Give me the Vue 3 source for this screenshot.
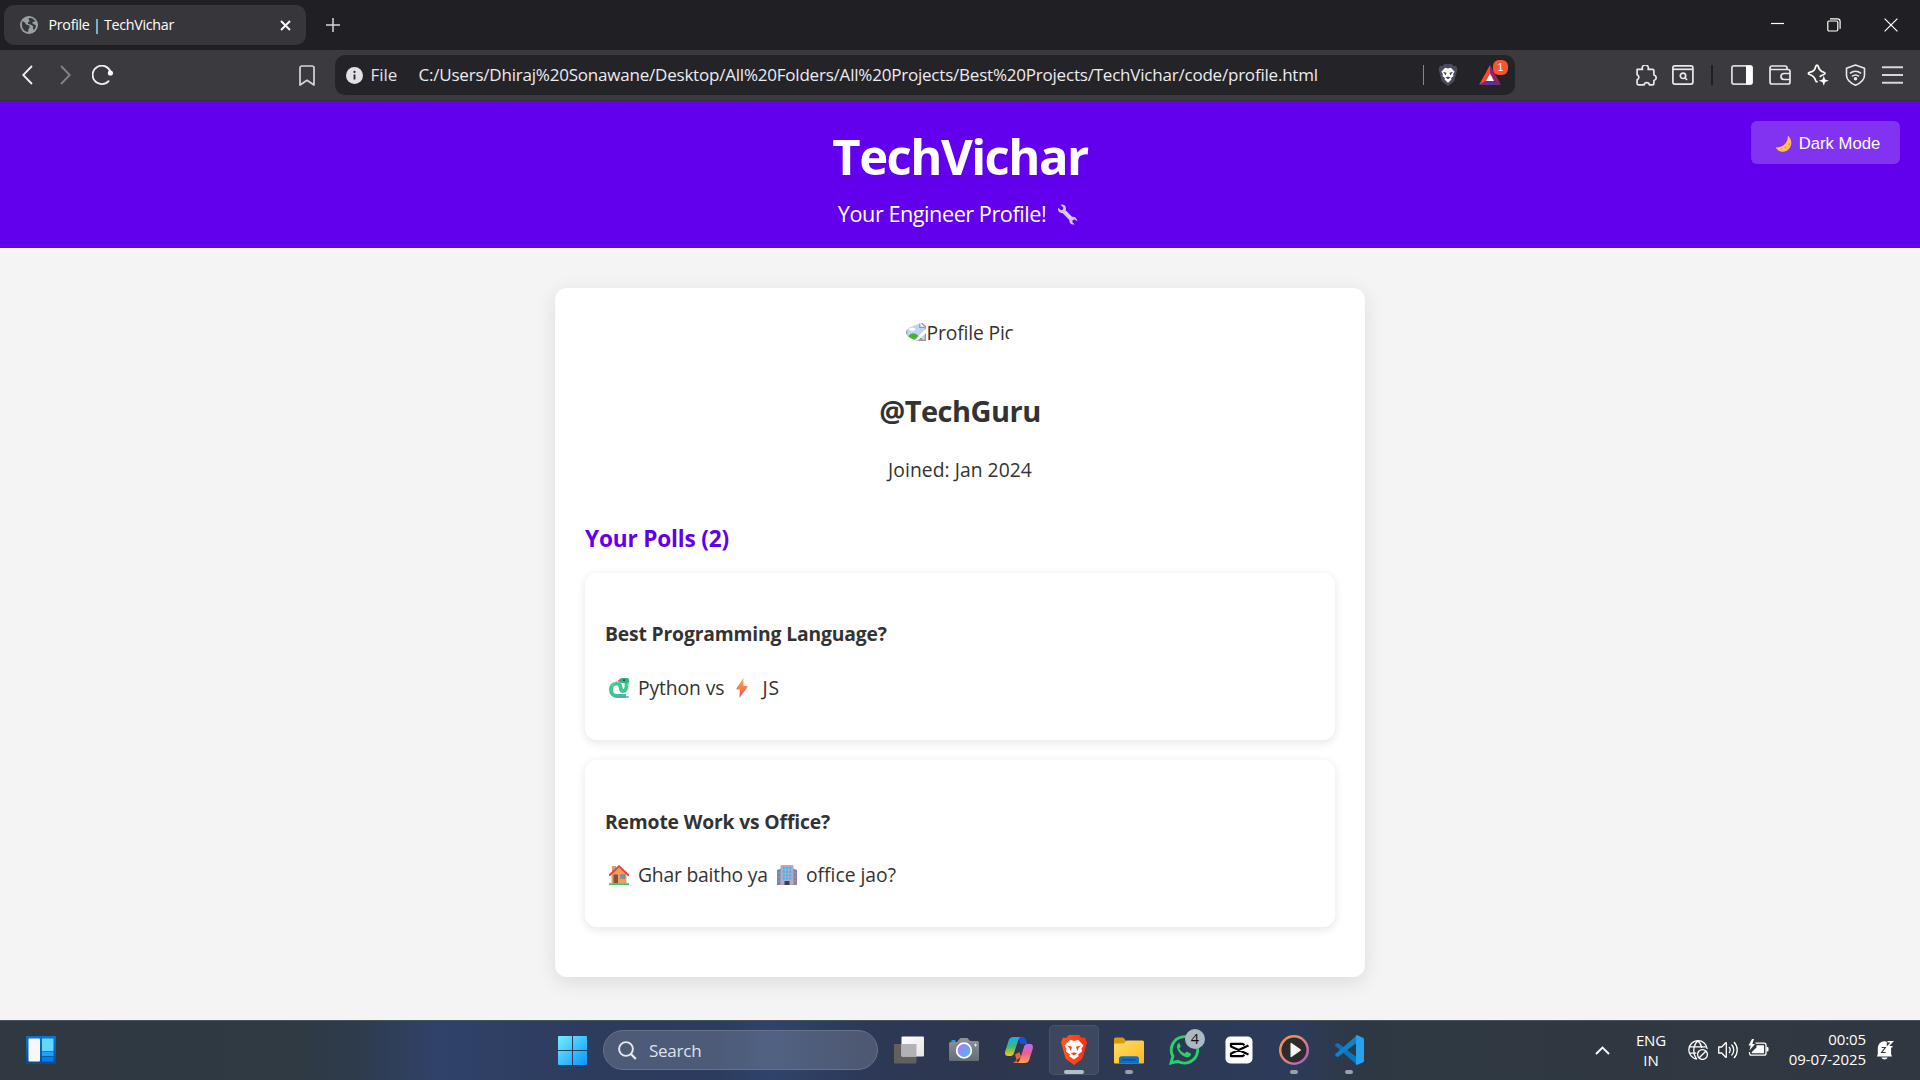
<script setup>
const url = 'C:/Users/Dhiraj%20Sonawane/Desktop/All%20Folders/All%20Projects/Best%20Projects/TechVichar/code/profile.html'
</script>

<template>
  <div class="screen">
    <div class="tabstrip">
      <div class="tab">
        <svg class="tab-globe" width="18" height="18" viewBox="0 0 18 18">
          <circle cx="9" cy="9" r="9" fill="#9aa0a6" />
          <path d="M2.2 5.2C4.5 6 5.6 6.8 6.1 8.6L9.2 9.4 9.8 11.2 8.4 13.2 8.2 15.9C4.6 15.6 2 12.8 2 9.2 2 7.6 1.8 6.4 2.2 5.2ZM8.3 2.3 11 2.1C12.8 2.6 14.4 3.7 15.3 5.4L12.3 6 12.8 7.8 15.9 9.2C15.9 11.1 15.1 12.8 13.8 14L12.9 12.2 13.2 10.2 10.6 8.6 8.2 7.9 7.9 6.2 9.6 5.5Z" fill="#37363b" />
        </svg>
        <span class="tab-title">Profile | TechVichar</span>
        <svg width="11" height="11" viewBox="0 0 11 11"><path d="M1 1l9 9M10 1l-9 9" stroke="#fff" stroke-width="1.9" fill="none" /></svg>
      </div>
      <svg class="plus" width="14" height="14" viewBox="0 0 14 14"><path d="M7 0v14M0 7h14" stroke="#d6d5da" stroke-width="1.5" /></svg>
      <div class="window-buttons">
        <svg width="13" height="14" viewBox="0 0 13 14"><path d="M0 5.5h13" stroke="#fff" stroke-width="1.2" /></svg>
        <svg width="14" height="14" viewBox="0 0 14 14" fill="none" stroke="#fff" stroke-width="1.2"><rect x=".8" y="3" width="10" height="10" rx="1.2" /><path d="M3 .8h7.5a2.6 2.6 0 0 1 2.6 2.6v7.3" /></svg>
        <svg width="14" height="14" viewBox="0 0 14 14"><path d="M.6.6l12.8 12.8M13.4.6L.6 13.4" stroke="#fff" stroke-width="1.2" /></svg>
      </div>
    </div>

    <div class="toolbar">
      <div class="nav">
        <svg width="11" height="20" viewBox="0 0 11 20"><path d="M10 1L1.2 10 10 19" fill="none" stroke="#f1f0f4" stroke-width="1.8" /></svg>
        <svg width="11" height="20" viewBox="0 0 11 20"><path d="M1 1l8.8 9L1 19" fill="none" stroke="#858389" stroke-width="1.8" /></svg>
        <svg width="22" height="20" viewBox="0 0 22 20"><path d="M16.6 16.1A9.2 9.2 0 1 1 18.6 7" fill="none" stroke="#f1f0f4" stroke-width="1.8" stroke-linecap="round" /><circle cx="18.4" cy="8" r="2.6" fill="#fff" /></svg>
      </div>
      <svg class="bookmark" width="16" height="21" viewBox="0 0 16 21"><path d="M3 1h10a2 2 0 0 1 2 2v17l-7-4.7L1 20V3a2 2 0 0 1 2-2z" fill="none" stroke="#d6d5da" stroke-width="1.7" stroke-linejoin="round" /></svg>
      <div class="address">
        <svg class="info" width="17" height="17" viewBox="0 0 17 17"><circle cx="8.5" cy="8.5" r="8.5" fill="#e3e1e8" /><path d="M8.5 7.5v5" stroke="#242328" stroke-width="1.8" /><circle cx="8.5" cy="4.9" r="1.1" fill="#242328" /></svg>
        <span class="scheme">File</span>
        <span class="url">{{ url }}</span>
        <i class="address-rule"></i>
        <svg class="shield" width="20" height="22" viewBox="0 0 26 30">
          <path d="M8 0h10l3 3 3-.5 2 5-1 3-3 11c-.5 2-1.500 3-3 4l-6 4.500-6-4.500c-1.500-1-2.500-2-3-4L1 10.500 0 7.500l2-5L5 3z" fill="#4a4a5e" />
          <path d="M13 6l4-1 5 5.500-2 3 .5 3-3.500 3 .8 1.700L13 25.500l-4.800-4.300.8-1.700-3.500-3 .5-3-2-3L9 5z" fill="#fff" />
          <path d="M6 10.500l5 1.300-.5 2-1 1.800-1.500-2.600zM20 10.500l-5 1.300.5 2 1 1.800 1.500-2.600zM9.500 18.500l3.500-1.300 3.500 1.300-3.500 2.300z" fill="#4a4a5e" />
        </svg>
        <div class="rewards">
          <svg width="22" height="20" viewBox="0 0 22 20">
            <path d="M11 0L0 20l7-4 4-7z" fill="#ff4724" /><path d="M11 0l11 20-7-4-4-7z" fill="#9e1f63" /><path d="M0 20h22l-7-4H7z" fill="#662d91" /><path d="M11 8.200L15 16H7z" fill="#fff" />
          </svg>
          <b class="rewards-count">1</b>
        </div>
      </div>

      <div class="extensions">
        <svg class="puzzle" width="22" height="21" viewBox="0 0 22 21"><path d="M2.200 4.200h5a3.100 3.100 0 1 1 5.600 0h4.400a1.400 1.400 0 0 1 1.400 1.400v4.200a2.800 2.800 0 0 1 0 5.500v3a1.400 1.400 0 0 1-1.400 1.400h-3.100a2.700 2.700 0 0 0-5.300 0H3.200a1.400 1.400 0 0 1-1.400-1.400v-3.600a2.800 2.800 0 0 0 0-5.200V4.200z" transform="translate(.3 .2)" fill="none" stroke="#e9e8ec" stroke-width="1.700" stroke-linejoin="round" /></svg>
        <svg width="22" height="20" viewBox="0 0 22 20" fill="none" stroke="#e9e8ec" stroke-width="1.700"><rect x=".9" y=".9" width="20" height="18.200" rx="2" /><path d="M1 4.300h20" /><circle cx="11" cy="10.800" r="2.700" /><path d="M13 12.800l2 2.200" /></svg>
        <i class="ext-rule"></i>
        <svg width="22" height="20" viewBox="0 0 22 20"><rect x=".9" y=".9" width="20.200" height="18.200" rx="2" fill="none" stroke="#d6d5da" stroke-width="1.800" /><path d="M15 .5h4.500a2 2 0 0 1 2 2v15a2 2 0 0 1-2 2H15z" fill="#fff" /></svg>
        <svg width="22" height="20" viewBox="0 0 22 20" fill="none" stroke="#e9e8ec" stroke-width="1.700"><path d="M1 3.500V17a2 2 0 0 0 2 2h16a2 2 0 0 0 2-2V6.500a2 2 0 0 0-2-2H2.500A1.500 1.500 0 0 1 1 3 2 2 0 0 1 3 1h13a2 2 0 0 1 2 2v1.500M21 8.500h-6a3 3 0 0 0 0 6h6" /></svg>
        <svg width="22" height="22" viewBox="0 0 22 22"><path d="M10 1.200c.7 0 1 .4 1.200 1 .9 3.600 2 5 5.600 6 1.700.5 1.700 1.800 0 2.300-1.600.5-2.700 1-3.500 1.900M10 1.200c-.7 0-1 .4-1.200 1-.9 3.800-2 5.100-6.200 6.100-1.700.4-1.700 1.700 0 2.200 3.600 1 5 2.500 6 6.100.2.900.7 1.300 1.400 1.100" fill="none" stroke="#fff" stroke-width="1.700" stroke-linecap="round" /><path d="M16.800 11.800l1.300 3.700 3.700 1.300-3.700 1.300-1.300 3.700-1.300-3.700-3.700-1.300 3.700-1.300z" fill="#fff" /></svg>
        <svg width="21" height="22" viewBox="0 0 21 22" fill="none" stroke="#e9e8ec" stroke-width="1.600"><path d="M10.500 1l9 3.200v7c0 4.500-4 7.800-9 10-5-2.200-9-5.500-9-10v-7z" stroke-linejoin="round" /><path d="M5 9.300c3.300-2.700 7.700-2.700 11 0M7 12.300c2.200-1.700 4.800-1.700 7 0" /><circle cx="10.500" cy="14.700" r="1" fill="#fff" /></svg>
        <svg width="21" height="18" viewBox="0 0 21 18"><path d="M0 1.200h21M0 9h21M0 16.800h21" stroke="#d6d5da" stroke-width="1.900" /></svg>
      </div>
    </div>

    <header class="hero">
      <h1>TechVichar</h1>
      <p class="tagline">
        <span>Your Engineer Profile!</span>
        <svg width="21" height="21" viewBox="0 0 21 21">
          <path d="M1.200 3.800L4 6.200 6 5.600 6.200 3.300 3.600.9C6.300-.2 9.200 1.600 9 5L8.700 6.200 15 12.800C17.500 12.200 20.300 14 20.300 17.200L17.600 15.400 15.700 16 15.400 18.200 17.700 20.200C14.600 21.200 12 19.200 12.300 15.900L5.700 9.200C2.800 9.600.4 7.200 1.200 3.800Z" fill="#d3c4e4" />
          <path d="M8 7.500l6 6.300" stroke="#eee6f4" stroke-width="1" />
        </svg>
      </p>
      <button class="theme">
        <svg width="17" height="17" viewBox="0 0 17 17"><path d="M12.800.4C18 4.800 17.300 12.600 11.600 15.700 7.500 17.800 2.600 16.500.6 12.200 7.500 13 13.400 8.300 12.800.4Z" fill="#ffc34d" /><circle cx="14.200" cy="9.300" r="1" fill="#e59a3c" /><circle cx="10.600" cy="12.300" r="1.200" fill="#eda743" /><circle cx="6.300" cy="14" r=".8" fill="#e59a3c" /></svg>
        Dark Mode
      </button>
    </header>

    <main class="page">
      <section class="card">
        <div class="avatar">
          <svg width="20" height="20" viewBox="0 0 16 16">
            <path d="M.5.5h11l4 4v11H.5z" fill="#c2d4f5" stroke="#9a9a9a" /><path d="M11 1v4h4" fill="#fff" stroke="#9a9a9a" />
            <ellipse cx="5" cy="6.500" rx="2.500" ry="1.200" fill="#fff" /><path d="M1.500 15v-2.500c2-3 5-3.500 7.500-1.500l4.500 4z" fill="#4fae38" />
            <path d="M16 6L6.500 15.500H9.500l6.500-6z" fill="#fff" />
          </svg><span>Profile Pic</span>
        </div>
        <h2>@TechGuru</h2>
        <p class="joined">Joined: Jan 2024</p>
        <h3>Your Polls (2)</h3>
        <div class="polls">
          <article class="poll">
            <h4>Best Programming Language?</h4>
            <p>
              <svg class="snake" width="20" height="20" viewBox="0 0 20 20">
                <path d="M17 18H8C4 18 2 15.500 2 12 2 8.500 4 6 7 5.500c2.500-.3 4.300 1 4.500 3.500.2 2 .5 4 2.500 4s3.500-2 3.500-5V3.500" fill="none" stroke="#3fc495" stroke-width="3.800" />
                <path d="M3.500 8C4.500 5 7 4 9.500 4.600" stroke="#9be36a" stroke-width="1" fill="none" stroke-dasharray="1.500 1.500" />
                <path d="M10 1.800Q11 0 13 0h5.500Q20 0 20 2v3h-7.500Q10 5 10 1.800Z" fill="#2fb389" />
                <path d="M19 4v8" stroke="#9be36a" stroke-width="1" stroke-dasharray="1.500 1.500" />
                <circle cx="15" cy="2.200" r=".9" fill="#222" /><path d="M9 2.800h2.500" stroke="#f0477f" stroke-width="1.300" />
                <path d="M5 18.200Q10 20.200 20 19.400v-1.200z" fill="#4aa9c9" />
              </svg>
              <span class="w-python">Python vs</span>
              <svg class="bolt" width="12" height="20" viewBox="0 0 12 20"><defs><linearGradient id="bolt" x1="0" y1="0" x2="0" y2="1"><stop offset="0" stop-color="#ffb04a" /><stop offset="1" stop-color="#f04a52" /></linearGradient></defs><path d="M7.300 0L.4 10.500q-.4 1 .6 1h3L3.300 20 11.600 9q.4-1-.6-1H7.600z" fill="url(#bolt)" /></svg>
              <span class="w-js">JS</span>
            </p>
          </article>
          <article class="poll">
            <h4>Remote Work vs Office?</h4>
            <p>
              <svg class="house" width="20" height="20" viewBox="0 0 20 20">
                <path d="M3 1h4v6H3z" fill="#d9a06c" /><path d="M2.500 9L10 2l7.500 7v9.500h-15z" fill="#e8a066" /><path d="M4.500 9.500H9v9H4.500z" fill="#85503f" /><path d="M11.500 9.500H16v4h-4.500z" fill="#35a7f0" stroke="#b8744e" stroke-width=".6" />
                <path d="M.7 10L10 1.300 19.300 10" fill="none" stroke="#e5463d" stroke-width="2" stroke-linecap="round" /><path d="M0 18.200h20V20H0z" fill="#3ecb6b" />
              </svg>
              <span class="w-ghar">Ghar baitho ya</span>
              <svg class="office" width="20" height="20" viewBox="0 0 20 20">
                <path d="M0 5l4-1.500V20H0zM20 5l-4-1.500V20h4z" fill="#8c819c" /><path d="M3.500 1q0-1 1-1h11q1 0 1 1v19h-13z" fill="#b4abc0" />
                <path d="M5.800 2h2v2.300h-2zm3.200 0h2v2.300H9zm3.200 0h2v2.300h-2zM5.800 5.600h2v2.300h-2zm3.200 0h2v2.300H9zm3.200 0h2v2.300h-2zM5.800 9.200h2v2.300h-2zm3.200 0h2v2.300H9zm3.200 0h2v2.300h-2zM5.800 12.600h2v2h-2zm3.200 0h2v2H9zm3.200 0h2v2h-2zM1 7h1.300v2H1zm0 4h1.300v2H1zm0 4h1.300v2H1zM17.700 7H19v2h-1.300zm0 4H19v2h-1.300zm0 4H19v2h-1.300z" fill="#3db4f5" />
                <path d="M7.500 16h5v4h-5z" fill="#453a52" />
              </svg>
              <span class="w-office">office jao?</span>
            </p>
          </article>
        </div>
      </section>
    </main>

    <footer class="taskbar">
      <svg class="widgets" width="30" height="28" viewBox="0 0 30 28">
        <defs><linearGradient id="wd" x1="0" y1="0" x2="0" y2="1"><stop offset="0" stop-color="#0078d4" /><stop offset="1" stop-color="#114a8b" /></linearGradient></defs>
        <rect width="30" height="28" rx="1" fill="url(#wd)" /><rect x="2.500" y="2.500" width="11.500" height="23" rx="1" fill="#f7f7f7" /><rect x="16" y="2.500" width="11.500" height="12.500" fill="#62d7ff" /><rect x="16" y="15.500" width="11.500" height="4.500" fill="#18a4fb" /><rect x="16" y="20.800" width="11.500" height="4.700" fill="#0380ea" />
      </svg>
      <svg class="start" width="29" height="29" viewBox="0 0 29 29">
        <defs><linearGradient id="win" x1="0" y1="0" x2="1" y2="1"><stop offset="0" stop-color="#74eeff" /><stop offset="1" stop-color="#0795ff" /></linearGradient></defs>
        <path d="M1 0h13v14H0V1q0-1 1-1zm14 0h13q1 0 1 1v13H15zM0 15h14v14H1q-1 0-1-1zm15 0h14v13q0 1-1 1H15z" fill="url(#win)" />
      </svg>
      <div class="search">
        <svg width="19" height="19" viewBox="0 0 19 19"><circle cx="8" cy="8" r="6.900" fill="none" stroke="#e6e8ee" stroke-width="1.900" /><path d="M12.500 12.500l5.300 5.500" stroke="#e6e8ee" stroke-width="2.400" /></svg>
        <span>Search</span>
      </div>
      <div class="apps">
        <div class="app">
          <svg width="30" height="30" viewBox="0 0 30 30"><defs><linearGradient id="tv" x1="0" y1="0" x2="1" y2="1"><stop offset="0" stop-color="#fff" /><stop offset="1" stop-color="#e4e4e4" /></linearGradient></defs><rect y="9" width="22.500" height="19.500" rx="1" fill="#61605f" /><rect x="7.500" y="1.500" width="22.500" height="20" rx="1" fill="url(#tv)" /><path d="M7.500 9h15v12.500h-15z" fill="#b2b2b2" /></svg>
        </div>
        <div class="app">
          <svg width="30" height="30" viewBox="0 0 30 30">
            <defs><linearGradient id="cam" x1="0" y1="0" x2="1" y2="1"><stop offset="0" stop-color="#c36df0" /><stop offset="1" stop-color="#35c6f5" /></linearGradient><linearGradient id="cb" x1="0" y1="0" x2="0" y2="1"><stop offset="0" stop-color="#8d949b" /><stop offset="1" stop-color="#666c73" /></linearGradient></defs>
            <path d="M2.500 5h4v3h-4z" fill="#1f9fe8" /><path d="M9 5.500L11.500 3h7L21 6h7.500Q30 6 30 7.500v17q0 1.500-1.500 1.500h-27Q0 26 0 24.500V8.500Q0 7 1.500 7H8z" fill="url(#cb)" /><circle cx="15" cy="15.500" r="7.300" fill="url(#cam)" stroke="#fff" stroke-width="1.800" /><path d="M26.500 8.500v3M25 10h3" stroke="#dfe3e6" />
          </svg>
        </div>
        <div class="app">
          <svg width="30" height="30" viewBox="0 0 30 30">
            <defs>
              <linearGradient id="c1" x1="0" y1="0" x2="0" y2="1"><stop offset="0" stop-color="#15aef0" /><stop offset=".5" stop-color="#3cb87d" /><stop offset="1" stop-color="#f5c914" /></linearGradient>
              <linearGradient id="c2" x1="0" y1="0" x2="0" y2="1"><stop offset="0" stop-color="#b56cf5" /><stop offset=".5" stop-color="#ee5c92" /><stop offset="1" stop-color="#ffa54c" /></linearGradient>
            </defs>
            <path d="M14 2h4.500c2 0 2.800 1 3.500 3l1.500 4H16z" fill="#1d4fd7" />
            <path d="M9 28h7c-2 0-3-1-3.500-3L11 19.500l4.500-2.500 1.500 5z" fill="#f0603c" />
            <path d="M9.500 2H17c-1.500.5-2.300 1.600-3 4l-4 12c-.7 2.200-1.500 3-3.500 3H4C1.600 21 .5 19 1.200 16.500L4.500 6C5.500 3 7 2 9.500 2z" fill="url(#c1)" />
            <path d="M20.500 28H13c1.500-.5 2.300-1.600 3-4l4-12c.7-2.200 1.500-3 3.500-3H26c2.400 0 3.500 2 2.800 4.500L25.500 24c-1 3-2.500 4-5 4z" fill="url(#c2)" />
          </svg>
        </div>
        <div class="app active">
          <svg width="26" height="30" viewBox="0 0 26 30">
            <defs><linearGradient id="br"><stop offset="0" stop-color="#ff5a1f" /><stop offset="1" stop-color="#ff2f14" /></linearGradient></defs>
            <path d="M8 0h10l3 3 3-.5 2 5-1 3-3 11c-.5 2-1.500 3-3 4l-6 4.500-6-4.500c-1.500-1-2.500-2-3-4L1 10.500 0 7.500l2-5L5 3z" fill="url(#br)" />
            <path d="M13 6l4-1.200 5.500 5.700-2 3 .5 3-4 3 .8 1.500L13 24.500 8.200 21l.8-1.500-4-3 .5-3-2-3L9 4.800z" fill="#fff" />
            <path d="M6 10.500l5 1.300-.5 2-1 2.200-1-3zM20 10.500l-5 1.300.5 2 1 2.200 1-3zM9.800 18.500l3.200-1.300 3.200 1.300-3.200 2z" fill="#ff4019" />
          </svg>
          <i class="dot wide"></i>
        </div>
        <div class="app">
          <svg width="30" height="30" viewBox="0 0 30 30">
            <defs><linearGradient id="fo" x1="0" y1="0" x2="1" y2="1"><stop offset="0" stop-color="#ffdb6b" /><stop offset="1" stop-color="#fcba1a" /></linearGradient></defs>
            <path d="M0 4q0-1.500 1.500-1.500H9L12.500 6v6H0z" fill="#dc9a07" /><path d="M0 8.500h9.500L13 5.500h15.500Q30 5.500 30 7v20.500q0 1-1 1H1q-1 0-1-1z" fill="url(#fo)" /><path d="M5 28.500V24q0-2.700 2.700-2.700h14.600Q25 21.300 25 24v4.500z" fill="#0f6fc6" /><path d="M8.500 24.800h13" stroke="#0a4a88" stroke-width="1.200" />
          </svg>
          <i class="dot"></i>
        </div>
        <div class="app">
          <svg width="30" height="30" viewBox="0 0 30 30"><path d="M2 28l1.900-6.800A13.200 13.200 0 1 1 8.900 26.300z" fill="none" stroke="#25d366" stroke-width="2.900" /><path d="M10 8c-1.500.8-2.400 2.300-2 4.500 1 4.500 5 9 9.700 9.800 2 .3 4-.9 4.300-3 0-.6-.2-.8-.7-1l-3-1.500c-.5-.2-.8-.2-1.200.3l-1.200 1.500c-3-1-4.500-2.700-5.700-5l1.300-1.700c.2-.4.2-.7 0-1.100l-1.200-2.700z" fill="#25d366" /></svg>
          <b class="app-badge">4</b>
        </div>
        <div class="app">
          <svg width="30" height="30" viewBox="0 0 30 30"><rect x="1.500" y="1.500" width="27" height="27" rx="5" fill="#fff" /><path d="M24.500 10.500L7 18.500V21.200H18.500L20.500 19.800M24.500 19.500L7 11.500V8.800H18.500L20.500 10.200" fill="none" stroke="#000" stroke-width="2.200" stroke-linejoin="round" /></svg>
        </div>
        <div class="app">
          <svg width="30" height="30" viewBox="0 0 30 30">
            <defs><linearGradient id="mp" x1="0" y1="0" x2="1" y2="1"><stop offset="0" stop-color="#ff9a3d" /><stop offset=".5" stop-color="#e08383" /><stop offset="1" stop-color="#9a55d8" /></linearGradient></defs>
            <circle cx="15" cy="15" r="15" fill="url(#mp)" /><circle cx="15" cy="15" r="12.500" fill="#2d2c2c" /><path d="M11.500 8.500q0-1 1-.5l9 6.200q.8.800 0 1.500l-9 6.300q-1 .5-1-.5z" fill="#f5f5f5" />
          </svg>
          <i class="dot"></i>
        </div>
        <div class="app">
          <svg width="30" height="30" viewBox="0 0 30 30"><path d="M.6 10.200L2.800 8.300q.7-.5 1.500 0L22.500 22v7.500z" fill="#0a74be" /><path d="M.6 19.800l2.200 1.900q.7.500 1.500 0L22.500 8V.5z" fill="#0f82cc" /><path d="M22 .4q.5-.5 1.400-.2l5.600 2.600q1 .5 1 1.500v21.400q0 1-1 1.500l-5.600 2.600q-.9.300-1.400-.2z" fill="#27a2ef" /></svg>
          <i class="dot"></i>
        </div>
      </div>
      <div class="tray">
        <svg class="chev" width="15" height="9" viewBox="0 0 15 9"><path d="M1 8l6.500-6.500L14 8" fill="none" stroke="#fff" stroke-width="1.900" /></svg>
        <div class="lang"><span>ENG</span><span>IN</span></div>
        <svg class="net" width="20" height="20" viewBox="0 0 20 20" fill="none" stroke="#fff" stroke-width="1.300"><path d="M9 19A9.200 9.200 0 1 1 19.200 9M1.300 6.800h17.400M1.300 13.200h7M8.500 19c-3.800-5-3.800-13 1.200-18.200C12.300 3 13.500 5.600 13.700 8" /><circle cx="14.500" cy="14.500" r="4.900" /><path d="M11.200 17.800l6.600-6.600" /></svg>
        <svg class="vol" width="20" height="20" viewBox="0 0 20 20" fill="none" stroke="#fff" stroke-width="1.300"><path d="M.7 7h3l4-4.200q.6-.4.600.3v13.800q0 .7-.6.3L3.700 13h-3z" stroke-linejoin="round" /><path d="M11 7c1.500 1.800 1.500 4.200 0 6M13.500 4.500c3 3.200 3 7.800 0 11M16 2c4.300 4.600 4.300 11.400 0 16" /></svg>
        <svg class="bat" width="21" height="20" viewBox="0 0 21 20"><path d="M7.500 4.200H16q2 0 2 2v8q0 2-2 2H3.500q-2 0-2-2V13" fill="none" stroke="#fff" stroke-width="1.300" /><path d="M8.500 6.200h7.500v8H3.800v-1.200l4.700-4.500zM18.500 8h1q1 0 1 1v2.500q0 1-1 1h-1z" fill="#fff" /><path d="M4 0L.5 6.500h2.200L1.500 11.500 7 5H4.300L6 0z" fill="#fff" /></svg>
        <div class="clock"><span>00:05</span><span>09-07-2025</span></div>
        <svg class="bell" width="18" height="20" viewBox="0 0 18 20"><path d="M1.800 14V8a6.700 6.700 0 0 1 9-6.300V7h4.300v7l.9 2.500H.9zM5.300 17.500h6.400q-1 2-3.200 2t-3.200-2z" fill="#fff" /><path d="M5.700 7.500h3.600l-3.600 5h4" fill="none" stroke="#2f3740" stroke-width="1.200" /><path d="M11.500 1.700h4.700l-4.700 5h5" fill="none" stroke="#fff" stroke-width="1.500" /></svg>
      </div>
    </footer>
  </div>
</template>

<style>
body { margin: 0; }
</style>

<style scoped>
.screen { width: 1920px; height: 1080px; display: flex; flex-direction: column; overflow: hidden; background: #f4f4f4; color: #333; font-family: "Open Sans", "Noto Sans", sans-serif; }
svg { display: block; flex: none; }
h1, h2, h3, h4, p { margin: 0; }
span { white-space: nowrap; }

.tabstrip { height: 50px; box-sizing: border-box; flex: none; display: flex; align-items: center; padding: 0 22px 0 4px; background: #201f24; }
.tab { width: 302px; height: 40px; box-sizing: border-box; display: flex; align-items: center; padding: 0 15px 0 16px; border-radius: 10px; background: #37363b; }
.tab-title { flex: 1; padding-left: 10.500px; font-size: 14.3px; letter-spacing: -.3px; line-height: 20px; color: #fff; }
.plus { margin-left: 20px; }
.window-buttons { margin-left: auto; display: flex; align-items: center; gap: 43px; }

.toolbar { height: 51px; box-sizing: border-box; flex: none; display: flex; align-items: center; padding: 0 17px 0 22px; border-bottom: 1px solid #333238; background: #3b3a3f; }
.nav { display: flex; align-items: center; gap: 27px; width: 277px; }
.nav svg:last-child { margin-left: -6px; }
.address { width: 1180px; height: 40px; box-sizing: border-box; margin-left: 20px; display: flex; align-items: center; padding: 0 14px 0 11px; border-radius: 10px; background: #242328; color: #ececf1; font-size: 17px; line-height: 24px; }
.scheme { margin-left: 7.500px; width: 48px; color: #e3e1e8; }
.url { flex: 1; letter-spacing: -.21px; }
.address-rule { width: 1px; height: 20px; margin-right: 14px; background: #87858b; }
.rewards { position: relative; margin-left: 21px; }
.rewards-count { position: absolute; left: 14px; top: -5px; width: 15px; height: 15px; border-radius: 6px; background: #fb542b; color: #fff; font: 400 10.5px/15px "Liberation Sans", sans-serif; text-align: center; }
.extensions { margin-left: auto; display: flex; align-items: center; gap: 16px; }
.puzzle { margin-right: -1px; }
.ext-rule { width: 2px; height: 20px; margin: 0 2px 0 1px; background: #1f1e23; }

.hero { position: relative; height: 147px; box-sizing: border-box; flex: none; display: flex; flex-direction: column; align-items: center; padding-top: 22px; background: #6200ee; color: #fff; }
h1 { font-size: 49px; line-height: 66px; letter-spacing: -1.55px; }
.tagline { display: flex; align-items: center; gap: 11px; margin-top: 10px; font-size: 21.7px; line-height: 30px; letter-spacing: -.48px; }
.tagline span { margin-left: -4px; }
.theme { position: absolute; top: 20px; right: 20px; width: 149px; height: 43px; display: flex; align-items: center; justify-content: center; gap: 7px; padding: 2px 0 0 4px; border: 0; border-radius: 6px; background: rgba(255, 255, 255, .2); color: #fff; font: 16.67px "Liberation Sans", Arial, sans-serif; }

.page { flex: 1; display: flex; justify-content: center; align-items: flex-start; padding-top: 40px; }
.card { width: 810px; height: 689px; box-sizing: border-box; padding: 31px 30px 0; border-radius: 12px; background: #fff; box-shadow: 0 5px 20px rgba(0, 0, 0, .1); font-size: 19.3px; line-height: 27px; display: flex; flex-direction: column; }
.avatar { align-self: center; display: flex; width: 109px; height: 27px; overflow: hidden; border-radius: 50%; letter-spacing: -.15px; }
.avatar svg { margin: 2px 1px 0 0; }
h2 { margin-top: 45px; text-align: center; font-size: 29px; line-height: 40px; letter-spacing: -.5px; }
.joined { margin-top: 25px; text-align: center; letter-spacing: .05px; }
h3 { margin-top: 40px; font-size: 22.6px; line-height: 32px; letter-spacing: -.17px; color: #6200ee; }
.polls { margin-top: 18px; display: flex; flex-direction: column; gap: 20px; }
.poll { height: 167px; box-sizing: border-box; padding: 47px 20px 0; border-radius: 12px; background: #fff; box-shadow: 0 2.500px 10px rgba(0, 0, 0, .1); }
.poll h4 { font-size: 19.3px; line-height: 27px; letter-spacing: -.15px; }
.poll + .poll { padding-top: 48px; }
.poll + .poll p { margin-top: 26px; }
.poll p { display: flex; align-items: center; margin-top: 27px; }
.snake, .house { margin: 0 9px 0 4px; }
.w-python { width: 98px; letter-spacing: -.1px; }
.bolt { margin-right: 14.500px; }
.w-js { letter-spacing: .7px; }
.w-ghar { width: 139px; letter-spacing: -.2px; }
.office { margin-right: 9px; }

.taskbar { height: 60px; box-sizing: border-box; flex: none; display: flex; align-items: center; padding: 0 26px 1px; border-top: 1px solid #46545f; background: linear-gradient(90deg, #303841 0, #2f3a43 300px, #2e3b4b 350px, #30426a 440px, #2d3b5c 600px, #2c3c5f 720px, #2f446b 770px, #2d3958 860px, #2d364d 980px, #2d3851 1080px, #2d3b5a 1290px, #2e3845 1360px, #2f3941 1420px, #303740 100%); color: #fff; }
.start { margin-left: 502px; }
.search { width: 275px; height: 40px; box-sizing: border-box; margin-left: 16px; display: flex; align-items: center; gap: 12px; padding-left: 14px; border: 1px solid #657289; border-radius: 20px; background: rgba(255, 255, 255, .16); color: #dfe2e9; font-size: 17px; letter-spacing: -.25px; }
.apps { margin-left: 6px; display: flex; gap: 5px; }
.app { position: relative; width: 50px; height: 50px; display: flex; align-items: center; justify-content: center; border-radius: 5px; }
.app.active { background: rgba(255, 255, 255, .08); box-shadow: inset 0 0 0 1px rgba(255, 255, 255, .07); }
.dot { position: absolute; left: 21px; bottom: 1px; width: 8px; height: 4px; border-radius: 2px; background: #9ba1a9; }
.dot.wide { left: 15px; width: 20px; background: #b0c1c8; }
.app-badge { position: absolute; right: 4px; top: 4px; width: 20px; height: 20px; border-radius: 50%; background: #a9bac1; color: #111; font-size: 14.500px; font-weight: 400; line-height: 20px; text-align: center; }
.tray { margin-left: auto; display: flex; align-items: center; font-size: 15px; line-height: 20px; }
.lang { width: 30px; margin: 0 22px 0 26px; display: flex; flex-direction: column; align-items: center; letter-spacing: -.1px; }
.vol { margin-left: 10px; }
.bat { margin: -2px 0 0 10px; }
.clock { width: 97px; margin-top: -2px; display: flex; flex-direction: column; align-items: flex-end; letter-spacing: -.1px; }
.bell { margin-left: 10px; }
</style>
